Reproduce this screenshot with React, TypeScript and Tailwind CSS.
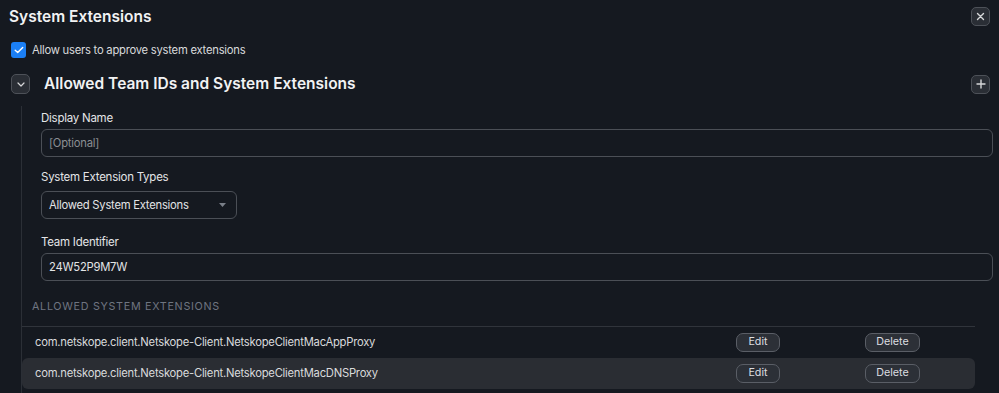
import React, { useState } from 'react';

const rows = [
  'com.netskope.client.Netskope-Client.NetskopeClientMacAppProxy',
  'com.netskope.client.Netskope-Client.NetskopeClientMacDNSProxy',
];

const IconButton = ({ children }: { children: React.ReactNode }) => (
  <button className="w-[19px] h-[19px] flex items-center justify-center rounded-[5px] bg-[#2a2e35] border border-[#4d5158] text-[#d6d7d9]">
    {children}
  </button>
);

const Label = ({ children }: { children: React.ReactNode }) => (
  <label className="block text-[11.5px] tracking-[-0.25px] leading-[14px] text-[#e4e5e7]">{children}</label>
);

const App = () => {
  const [allow, setAllow] = useState(true);
  const [open, setOpen] = useState(true);

  return (
    <div
      className="w-[999px] h-[393px] overflow-hidden bg-[#151920] text-[#e4e5e7]"
      style={{ fontFamily: 'Inter, "Noto Sans", sans-serif' }}
    >
      <header className="flex items-center justify-between pl-[9px] pr-[9px] pt-[6px] h-[27px]">
        <h1 className="text-[15.5px] font-semibold leading-[20px] text-[#f1f2f3]">System Extensions</h1>
        <IconButton>
          <svg width="9" height="9" viewBox="0 0 9 9" stroke="currentColor" strokeWidth="1.4" strokeLinecap="round">
            <path d="M1.5 1.5l6 6M7.5 1.5l-6 6" />
          </svg>
        </IconButton>
      </header>

      <div className="flex items-center gap-[6px] pl-[11px] mt-[15px] h-[16px]">
        <button
          onClick={() => setAllow(!allow)}
          className="w-[15px] h-[16px] rounded-[3px] bg-[#1b7ff5] flex items-center justify-center"
        >
          {allow && (
            <svg width="10" height="8" viewBox="0 0 10 8" fill="none" stroke="#fff" strokeWidth="1.4" strokeLinecap="round" strokeLinejoin="round">
              <path d="M1.2 4.2l2.5 2.4 5-5.2" />
            </svg>
          )}
        </button>
        <span className="text-[11.25px] tracking-[-0.25px] leading-[16px] text-[#d9dadc]">Allow users to approve system extensions</span>
      </div>

      <div className="flex items-center justify-between pl-[11px] pr-[9px] mt-[16px] h-[20px]">
        <div className="flex items-center gap-[14px]">
          <button
            onClick={() => setOpen(!open)}
            className="w-[19px] h-[20px] flex items-center justify-center rounded-[5px] bg-[#2a2e35] border border-[#4d5158] text-[#d6d7d9]"
          >
            <svg width="8" height="5" viewBox="0 0 8 5" fill="none" stroke="currentColor" strokeWidth="1.2" strokeLinecap="round" strokeLinejoin="round">
              <path d="M1 1l3 3 3-3" />
            </svg>
          </button>
          <h2 className="text-[15.5px] font-semibold leading-[20px] text-[#f1f2f3]">Allowed Team IDs and System Extensions</h2>
        </div>
        <IconButton>
          <svg width="10" height="10" viewBox="0 0 10 10" stroke="currentColor" strokeWidth="1.4" strokeLinecap="round">
            <path d="M5 1v8M1 5h8" />
          </svg>
        </IconButton>
      </div>

      <div className="ml-[21px] mt-[12px] border-l border-[#2b2f36] w-[954px] pt-[5px] h-[400px]">
        <div className="pl-[19px] w-[973px]">
          <Label>Display Name</Label>
          <div className="mt-[4px] w-[952px] h-[28px] rounded-[6px] border border-[#4b4f56] flex items-center pl-[7px]">
            <input
              placeholder="[Optional]"
              className="w-full bg-transparent text-[11.25px] tracking-[-0.25px] text-[#e4e5e7] placeholder:text-[#8b8e93] outline-none"
            />
          </div>

          <div className="mt-[13px]">
            <Label>System Extension Types</Label>
          </div>
          <div className="mt-[7px] w-[196px] h-[28px] rounded-[6px] border border-[#4b4f56] flex items-center justify-between pl-[7px] pr-[10px]">
            <span className="text-[11.25px] tracking-[-0.25px] text-[#e4e5e7]">Allowed System Extensions</span>
            <svg width="7" height="4" viewBox="0 0 7 4">
              <path d="M0 0h7L3.5 4z" fill="#7a7f88" />
            </svg>
          </div>

          <div className="mt-[16px]">
            <Label>Team Identifier</Label>
          </div>
          <div className="mt-[4px] w-[952px] h-[28px] rounded-[6px] border border-[#4b4f56] flex items-center pl-[7px]">
            <input
              defaultValue="24W52P9M7W"
              className="w-full bg-transparent text-[11.25px] tracking-[-0.25px] text-[#e4e5e7] outline-none"
            />
          </div>
        </div>

        <div className="pl-[10px] mt-[19px] text-[10.75px] leading-[14px] tracking-[0.7px] text-[#6f7580]">
          ALLOWED SYSTEM EXTENSIONS
        </div>

        <div className="mt-[12px] border-t border-[#30343b]">
          {rows.map((r, i) => (
            <div
              key={r}
              className={`flex items-center h-[31px] rounded-[6px] ${i === 1 ? 'bg-[#2a2d33]' : ''}`}
            >
              <span className="pl-[13px] w-[714px] text-[11.25px] tracking-[-0.25px] text-[#d9dadc]">{r}</span>
              <button className="w-[44px] h-[19px] rounded-[7px] border border-[#5a5e66] bg-[#2c3037] text-[10.75px] text-[#dcdde0]">
                Edit
              </button>
              <button className="ml-[85px] w-[55px] h-[19px] rounded-[7px] border border-[#5a5e66] bg-[#2c3037] text-[10.75px] text-[#dcdde0]">
                Delete
              </button>
            </div>
          ))}
        </div>
      </div>
    </div>
  );
};

export default App;
